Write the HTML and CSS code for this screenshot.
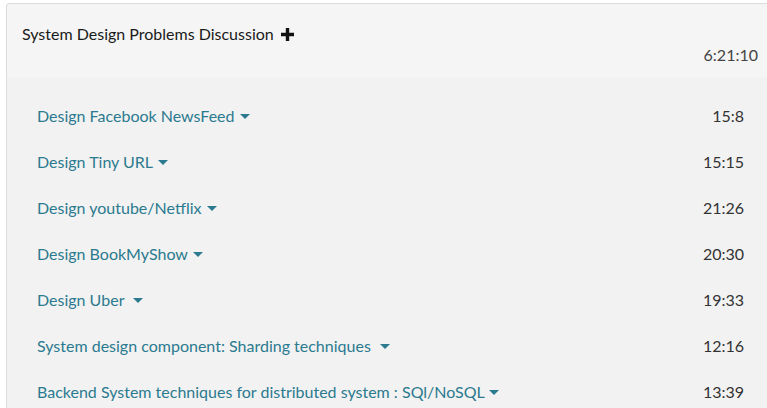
FILE: index.html
```html
<!DOCTYPE html>
<html>
<head>
<meta charset="utf-8">
<link rel="stylesheet" href="styles.css">
</head>
<body>
<div class="panel">
  <div class="panel-heading">
    <div class="title">System Design Problems Discussion <span class="plus">
      <svg width="13" height="13" viewBox="0 0 13 13"><path d="M4.8 0h3.4v4.8H13v3.4H8.2V13H4.8V8.2H0V4.8h4.8z" fill="#111"/></svg>
    </span></div>
    <div class="total">6:21:10</div>
  </div>
  <ul class="lessons">
    <li class="row"><span class="name">Design Facebook NewsFeed <span class="caret"></span></span><span class="dur">15:8</span></li>
    <li class="row"><span class="name">Design Tiny URL <span class="caret"></span></span><span class="dur">15:15</span></li>
    <li class="row"><span class="name">Design youtube/Netflix <span class="caret"></span></span><span class="dur">21:26</span></li>
    <li class="row"><span class="name">Design BookMyShow <span class="caret"></span></span><span class="dur">20:30</span></li>
    <li class="row"><span class="name">Design Uber &nbsp;<span class="caret"></span></span><span class="dur">19:33</span></li>
    <li class="row"><span class="name">System design component: Sharding techniques &nbsp;<span class="caret"></span></span><span class="dur">12:16</span></li>
    <li class="row"><span class="name">Backend System techniques for distributed system : SQl/NoSQL <span class="caret"></span></span><span class="dur">13:39</span></li>
  </ul>
</div>
</body>
</html>
```
FILE: styles.css
```css
html, body {
  margin: 0;
  padding: 0;
  overflow: hidden;
  background: #ffffff;
}
body {
  padding: 3px 0 0 6px;
  font-family: Lato, "Open Sans", sans-serif;
  font-size: 16px;
}
.panel {
  width: 770px;
  border: 1px solid #dcdcdc;
  border-right: none;
  border-radius: 4px 0 0 0;
  background: #f2f2f2;
  box-sizing: border-box;
}
.panel-heading {
  background: #f5f5f5;
  padding: 20px 18px 13px 15px;
  border-radius: 4px 0 0 0;
}
.title {
  line-height: 20px;
  color: #1a1a1a;
  display: flex;
  align-items: center;
}
.plus {
  display: inline-flex;
  margin-left: 7px;
}
.total {
  line-height: 20px;
  text-align: right;
  color: #444;
  position: relative;
  top: 1px;
}
.lessons {
  list-style: none;
  margin: 0;
  padding: 15px 32px 0 30px;
}
.row {
  height: 46px;
  display: flex;
  align-items: center;
  justify-content: space-between;
}
.name {
  color: #2b7a8f;
}
.caret {
  display: inline-block;
  width: 0;
  height: 0;
  border-left: 5px solid transparent;
  border-right: 5px solid transparent;
  border-top: 5px solid #2b7a8f;
  vertical-align: middle;
  margin-left: 1px;
  position: relative;
  top: -1px;
}
.dur {
  color: #333;
}
```
